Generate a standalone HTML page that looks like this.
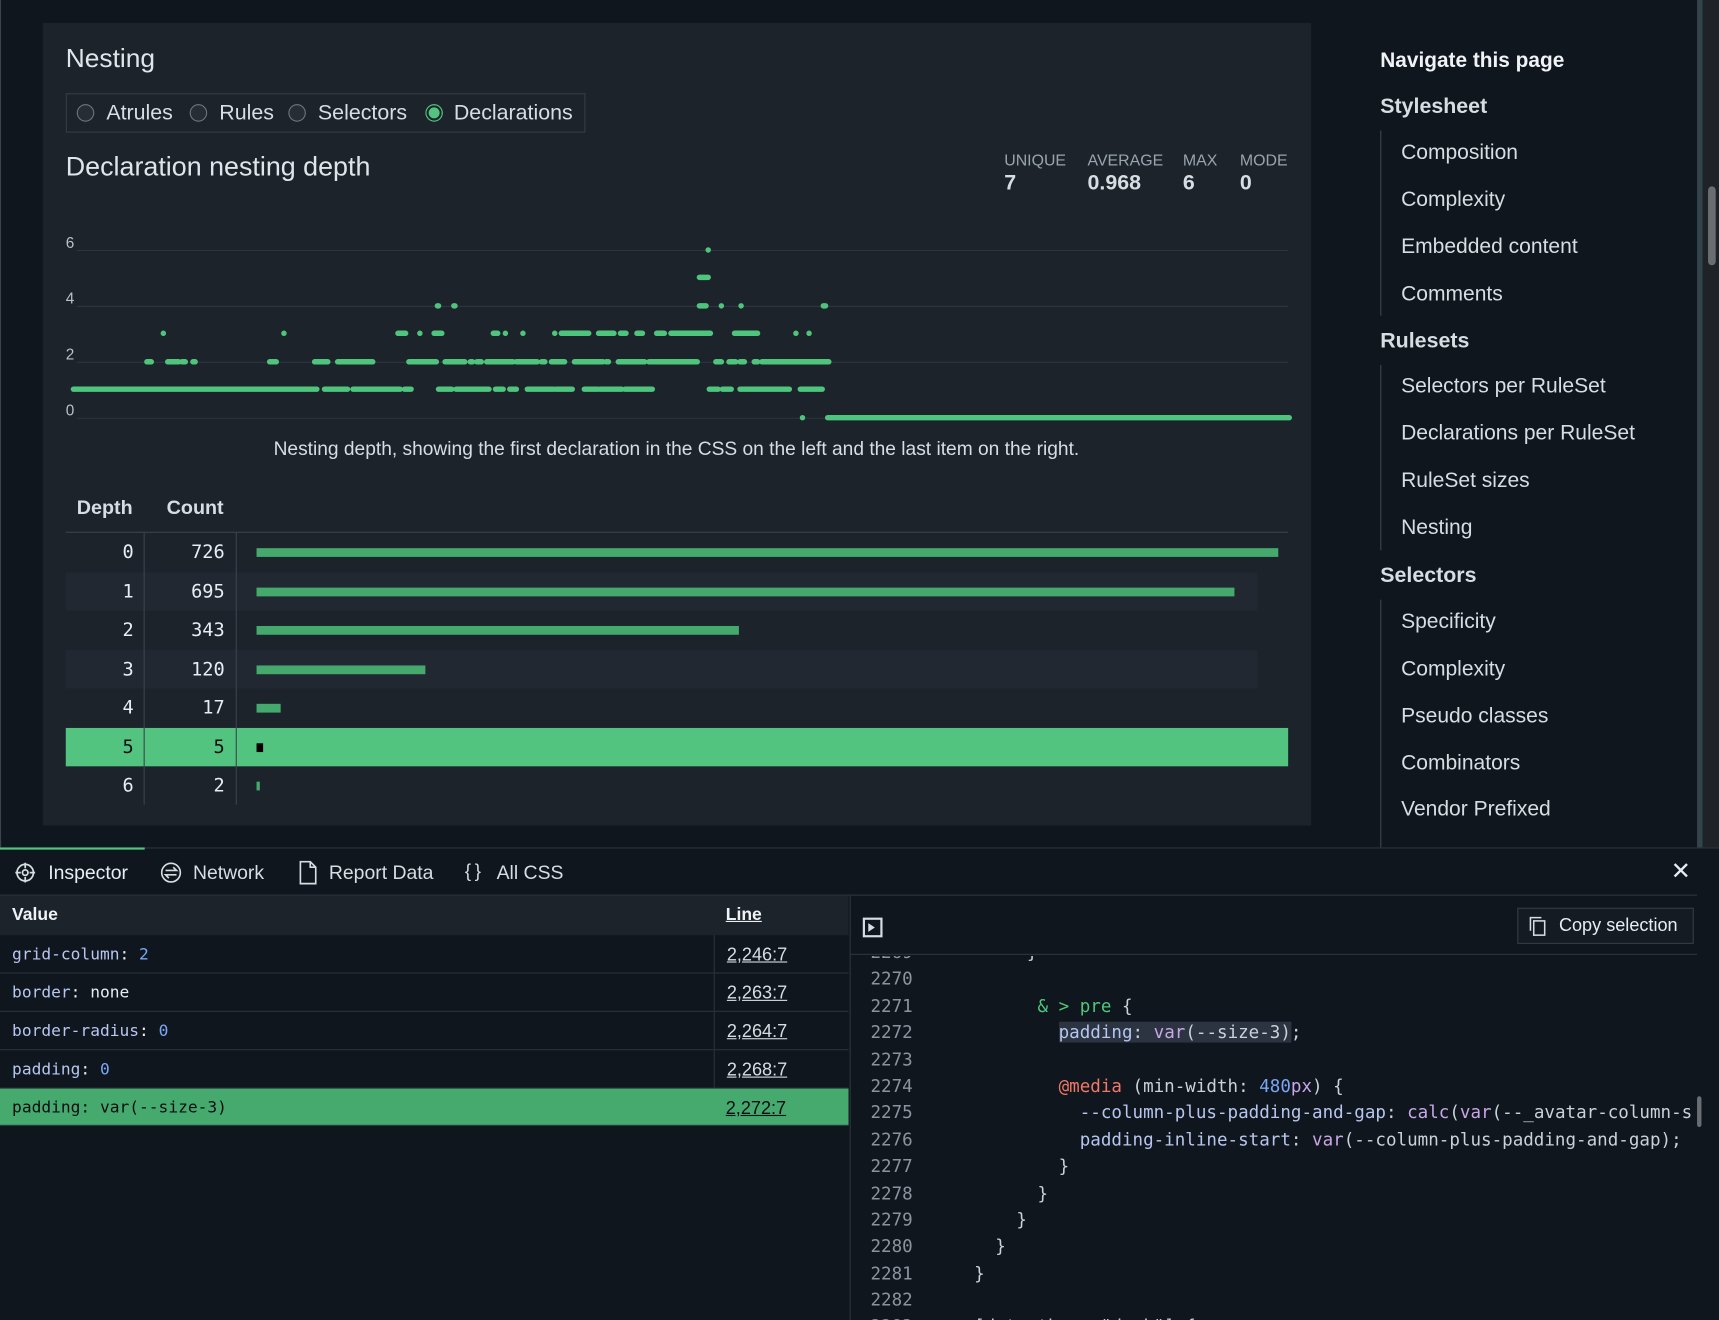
<!DOCTYPE html>
<html><head><meta charset="utf-8"><style>
*{margin:0;padding:0;box-sizing:border-box}
html,body{width:1719px;height:1320px;overflow:hidden;background:#10161d;font-family:"Liberation Sans",sans-serif;color:#e6edf3}
#w{position:absolute;left:0;top:0;width:1568px;height:1204px;transform:scale(1.0963);transform-origin:0 0;background:#10161d;overflow:hidden}
.a{position:absolute;white-space:nowrap}
.card{position:absolute;left:39px;top:21px;width:1157px;height:732px;background:#1c232b}
.mono{font-family:"DejaVu Sans Mono","Liberation Mono",monospace}
.radio{position:absolute;top:95px;width:16px;height:16px;border:1.5px solid #6e7681;border-radius:50%;background:#272d35}
.rl{position:absolute;top:92px;font-size:19.5px;color:#d7dde3}
.nav{font-size:19.2px;color:#d7dde3}
.row{position:absolute;left:60px;width:1115px;height:35.5px}
.row .d{position:absolute;left:30px;width:32px;text-align:right;top:8px;font-size:17px}
.row .c{position:absolute;left:100px;width:45px;text-align:right;top:8px;font-size:17px}
.row .b{position:absolute;left:174px;top:14px;height:8px;background:#45a96e}
.tr{position:absolute;left:0;width:774px;height:35px;border-bottom:1px solid #2a323c;font-size:14.8px}
.tr .v{position:absolute;left:11px;top:9px}
.tr .l{position:absolute;left:651px;top:0;height:34px;border-left:1px solid #2a323c;padding:9px 0 0 11px;text-decoration:underline;font-family:"Liberation Sans",sans-serif;font-size:16.5px;color:#d7dde3}
.p{color:#b7c6f0}.n{color:#79a6f6}
.code{position:absolute;left:778px;top:872px;width:770px;height:332px;overflow:hidden;font-size:16px;line-height:24.4px;color:#c9d1d9}
.code div div{white-space:pre;height:24.4px}
.ln{display:inline-block;width:72px;padding-left:16px;color:#8b949e}
</style></head><body><div id="w">
<div class="card"></div>
<div class="a" style="left:60px;top:40px;font-size:24px;color:#dfe5ea">Nesting</div>
<div class="a" style="left:60px;top:85px;width:474px;height:36px;border:1px solid #343c46;"></div>
<span class="radio" style="left:70px"></span><span class="rl" style="left:97px">Atrules</span>
<span class="radio" style="left:173px"></span><span class="rl" style="left:200px">Rules</span>
<span class="radio" style="left:263px"></span><span class="rl" style="left:290px">Selectors</span>
<span class="radio" style="left:388px;border-color:#52c47f;background:#52c47f;box-shadow:inset 0 0 0 2px #1c232b"></span><span class="rl" style="left:414px">Declarations</span>
<div class="a" style="left:60px;top:139px;font-size:24.5px;color:#dfe5ea">Declaration nesting depth</div>
<div class="a" style="left:916px;top:139px;font-size:14.5px;color:#9aa4ae">UNIQUE</div>
<div class="a" style="left:992px;top:139px;font-size:14.5px;color:#9aa4ae">AVERAGE</div>
<div class="a" style="left:1079px;top:139px;font-size:14.5px;color:#9aa4ae">MAX</div>
<div class="a" style="left:1131px;top:139px;font-size:14.5px;color:#9aa4ae">MODE</div>
<div class="a" style="left:916px;top:156px;font-size:19.5px;font-weight:bold;color:#d7dde3">7</div>
<div class="a" style="left:992px;top:156px;font-size:19.5px;font-weight:bold;color:#d7dde3">0.968</div>
<div class="a" style="left:1079px;top:156px;font-size:19.5px;font-weight:bold;color:#d7dde3">6</div>
<div class="a" style="left:1131px;top:156px;font-size:19.5px;font-weight:bold;color:#d7dde3">0</div>
<svg class="a" style="left:0;top:0" width="1568" height="460" viewBox="0 0 1568 460">
<g stroke="#2d3540" stroke-width="1"><line x1="70" y1="228.5" x2="1175" y2="228.5"/><line x1="70" y1="279.5" x2="1175" y2="279.5"/><line x1="70" y1="330.5" x2="1175" y2="330.5"/><line x1="70" y1="381.5" x2="1175" y2="381.5"/></g>
<g fill="#b8c0c8" font-size="14" font-family="Liberation Sans"><text x="60" y="226">6</text><text x="60" y="277">4</text><text x="60" y="328">2</text><text x="60" y="379">0</text></g>
<g stroke="#4fc47c" stroke-width="5" stroke-linecap="round" fill="none">
<path d="M67 355H289M296 355H317M322 355H365M369 355H375M400 355H412M416 355H446M452 355H459M465 355H471M481 355H505M507 355H522M533 355H545M547 355H567M570 355H595M647 355H655M659 355H667M675 355H720M730 355H750"/>
<path d="M134 330H138M153 330H163M166 330H169M176 330H178M246 330H252M287 330H299M308 330H340M373 330H398M406 330H424M429 330H431M435 330H439M444 330H468M471 330H490M494 330H497M503 330H515M524 330H550M553 330H555M564 330H588M592 330H636M653 330H658M665 330H671M675 330H679M688 330H691M695 330H756"/>
<path d="M149 304H149M259 304H259M363 304H370M383 304H383M396 304H403M450 304H454M461 304H461M477 304H477M506 304H506M512 304H537M546 304H560M566 304H571M581 304H586M599 304H606M612 304H648M670 304H691M726 304H726M738 304H738"/>
<path d="M399 279H400M414 279H415M638 279H644M658 279H658M676 279H676M751 279H753"/>
<path d="M638 253H646M646 228H646M732 381H732M755 381H1176"/>
</g>
<text x="617" y="415" text-anchor="middle" fill="#d7dde3" font-size="17.5" font-family="Liberation Sans">Nesting depth, showing the first declaration in the CSS on the left and the last item on the right.</text>
</svg>
<div class="a" style="left:70px;top:453px;font-size:18px;font-weight:bold;color:#d7dde3">Depth</div>
<div class="a" style="left:152px;top:453px;font-size:18px;font-weight:bold;color:#d7dde3">Count</div>
<div class="a" style="left:60px;top:485px;width:1115px;height:1px;background:#3a434e"></div>
<div class="row mono" style="top:486px"><span class="d">0</span><span class="c">726</span><span class="b" style="width:932px"></span></div>
<div class="row mono" style="top:521.5px;background:#212831;width:1087px"><span class="d">1</span><span class="c">695</span><span class="b" style="width:892px"></span></div>
<div class="row mono" style="top:557px"><span class="d">2</span><span class="c">343</span><span class="b" style="width:440px"></span></div>
<div class="row mono" style="top:592.5px;background:#212831;width:1087px"><span class="d">3</span><span class="c">120</span><span class="b" style="width:154px"></span></div>
<div class="row mono" style="top:628px"><span class="d">4</span><span class="c">17</span><span class="b" style="width:22px"></span></div>
<div class="row mono" style="top:663.5px;background:#52c47f;color:#0a0e12"><span class="d">5</span><span class="c">5</span><span class="b" style="width:6px;background:#000"></span></div>
<div class="row mono" style="top:699px"><span class="d">6</span><span class="c">2</span><span class="b" style="width:3px"></span></div>
<div class="a" style="left:131px;top:486px;width:1px;height:248px;background:#3a434e"></div>
<div class="a" style="left:215px;top:486px;width:1px;height:248px;background:#3a434e"></div>
<!-- sidebar -->
<div class="a" style="left:1259px;top:45px;font-size:19px;font-weight:bold;color:#f0f3f6">Navigate this page</div>
<div class="a" style="left:1259px;top:86px;font-size:19.5px;font-weight:bold;color:#d7dde3">Stylesheet</div>
<div class="a" style="left:1259px;top:300px;font-size:19.5px;font-weight:bold;color:#d7dde3">Rulesets</div>
<div class="a" style="left:1259px;top:514px;font-size:19.5px;font-weight:bold;color:#d7dde3">Selectors</div>
<div class="a" style="left:1259px;top:119px;width:1px;height:169px;background:#3a4650"></div>
<div class="a" style="left:1259px;top:333px;width:1px;height:169px;background:#3a4650"></div>
<div class="a" style="left:1259px;top:547px;width:1px;height:226px;background:#3a4650"></div>
<div class="a nav" style="left:1278px;top:129px">Composition</div>
<div class="a nav" style="left:1278px;top:172px">Complexity</div>
<div class="a nav" style="left:1278px;top:215px">Embedded content</div>
<div class="a nav" style="left:1278px;top:258px">Comments</div>
<div class="a nav" style="left:1278px;top:342px">Selectors per RuleSet</div>
<div class="a nav" style="left:1278px;top:385px">Declarations per RuleSet</div>
<div class="a nav" style="left:1278px;top:428px">RuleSet sizes</div>
<div class="a nav" style="left:1278px;top:471px">Nesting</div>
<div class="a nav" style="left:1278px;top:557px">Specificity</div>
<div class="a nav" style="left:1278px;top:600px">Complexity</div>
<div class="a nav" style="left:1278px;top:643px">Pseudo classes</div>
<div class="a nav" style="left:1278px;top:686px">Combinators</div>
<div class="a nav" style="left:1278px;top:728px">Vendor Prefixed</div>
<div class="a" style="left:1548px;top:0;width:5px;height:773px;background:#34444c"></div>
<div class="a" style="left:1553px;top:0;width:15px;height:773px;background:#1e2328"></div>
<div class="a" style="left:1558px;top:170px;width:7px;height:72px;border-radius:4px;background:#6a6e72"></div>
<div class="a" style="left:0;top:0;width:1px;height:1204px;background:#3a434e"></div>
<!-- bottom panel -->
<div class="a" style="left:0;top:773px;width:1568px;height:431px;background:#10161d;border-top:1px solid #2c3640"></div>
<div class="a" style="left:0;top:773px;width:132px;height:2px;background:#52c47f"></div>
<div class="a" style="left:0;top:816px;width:1548px;height:1px;background:#2c3640"></div>
<svg class="a" style="left:13px;top:786px" width="20" height="20" viewBox="0 0 20 20" fill="none" stroke="#d7dde3" stroke-width="1.6"><circle cx="10" cy="10" r="7.5"/><circle cx="10" cy="10" r="2.5"/><path d="M10 1v5M10 14v5M1 10h5M14 10h5"/></svg>
<div class="a" style="left:44px;top:786px;font-size:17.7px;color:#e6edf3">Inspector</div>
<svg class="a" style="left:146px;top:786px" width="20" height="20" viewBox="0 0 20 20" fill="none" stroke="#d7dde3" stroke-width="1.5"><circle cx="10" cy="10" r="8.5"/><path d="M5 8h10l-3-3M15 12H5l3 3"/></svg>
<div class="a" style="left:176px;top:786px;font-size:17.7px;color:#d7dde3">Network</div>
<svg class="a" style="left:272px;top:785px" width="18" height="22" viewBox="0 0 18 22" fill="none" stroke="#d7dde3" stroke-width="1.5"><path d="M2 1h9l5 5v15H2z M11 1v5h5"/></svg>
<div class="a" style="left:300px;top:786px;font-size:17.7px;color:#d7dde3">Report Data</div>
<div class="a" style="left:424px;top:785px;font-size:17px;color:#d7dde3">{&#8201;}</div>
<div class="a" style="left:453px;top:786px;font-size:17.7px;color:#d7dde3">All CSS</div>
<div class="a" style="left:1524px;top:782px;font-size:22px;color:#e6edf3">✕</div>
<!-- left table -->
<div class="a" style="left:0;top:817px;width:774px;height:36px;background:#1c232b"></div>
<div class="a" style="left:11px;top:826px;font-size:16px;font-weight:bold;color:#f0f3f6">Value</div>
<div class="a" style="left:662px;top:826px;font-size:16px;font-weight:bold;color:#f0f3f6;text-decoration:underline">Line</div>
<div class="tr mono" style="top:853px"><span class="v"><span class="p">grid-column</span>: <span class="n">2</span></span><span class="l">2,246:7</span></div>
<div class="tr mono" style="top:888px"><span class="v"><span class="p">border</span>: none</span><span class="l">2,263:7</span></div>
<div class="tr mono" style="top:923px"><span class="v"><span class="p">border-radius</span>: <span class="n">0</span></span><span class="l">2,264:7</span></div>
<div class="tr mono" style="top:958px"><span class="v"><span class="p">padding</span>: <span class="n">0</span></span><span class="l">2,268:7</span></div>
<div class="tr mono" style="top:993px;background:#46a96e;color:#0a0e12;height:34px"><span class="v">padding: var(--size-3)</span><span class="l" style="border:none;color:#0a0e12">2,272:7</span></div>
<div class="a" style="left:775px;top:817px;width:1px;height:387px;background:#2c3640"></div>
<!-- code pane -->
<div class="a" style="left:776px;top:870px;width:772px;height:1px;background:#2c3640"></div>
<div class="a" style="left:787px;top:837px;width:18px;height:18px;border:2px solid #d7dde3;background:#10161d"></div>
<div class="a" style="left:792px;top:842px;width:0;height:0;border-left:6px solid #d7dde3;border-top:4px solid transparent;border-bottom:4px solid transparent"></div>
<div class="a" style="left:1384px;top:828px;width:161px;height:33px;border:1px solid #343c46;background:#151b22"></div>
<svg class="a" style="left:1395px;top:836px" width="16" height="18" viewBox="0 0 16 18" fill="none" stroke="#d7dde3" stroke-width="1.4"><path d="M1 13V1h10"/><rect x="4" y="4" width="10" height="13"/></svg>
<div class="a" style="left:1422px;top:835px;font-size:16.5px;color:#e6edf3">Copy selection</div>
<div class="code mono"><div style="margin-top:-15px"><div><span class="ln">2269</span>         }</div><div><span class="ln">2270</span></div><div><span class="ln">2271</span>          <span style="color:#4ec77a">&amp; &gt; pre</span> {</div><div><span class="ln">2272</span>            <span style="background:#2b3440"><span class="p">padding</span>: <span style="color:#c9a6e6">var</span>(--size-3)</span>;</div><div><span class="ln">2273</span></div><div><span class="ln">2274</span>            <span style="color:#f07868">@media</span> (min-width: <span class="n">480</span><span style="color:#c9a6e6">px</span>) {</div><div><span class="ln">2275</span>              <span class="p">--column-plus-padding-and-gap</span>: <span style="color:#c9a6e6">calc</span>(<span style="color:#c9a6e6">var</span>(--_avatar-column-s</div><div><span class="ln">2276</span>              <span class="p">padding-inline-start</span>: <span style="color:#c9a6e6">var</span>(--column-plus-padding-and-gap);</div><div><span class="ln">2277</span>            }</div><div><span class="ln">2278</span>          }</div><div><span class="ln">2279</span>        }</div><div><span class="ln">2280</span>      }</div><div><span class="ln">2281</span>    }</div><div><span class="ln">2282</span></div><div><span class="ln">2283</span>    [data-theme="dark"] {</div></div></div>
<div class="a" style="left:1548px;top:1000px;width:4px;height:28px;border-radius:2px;background:#6a6e72"></div>
</div></body></html>
